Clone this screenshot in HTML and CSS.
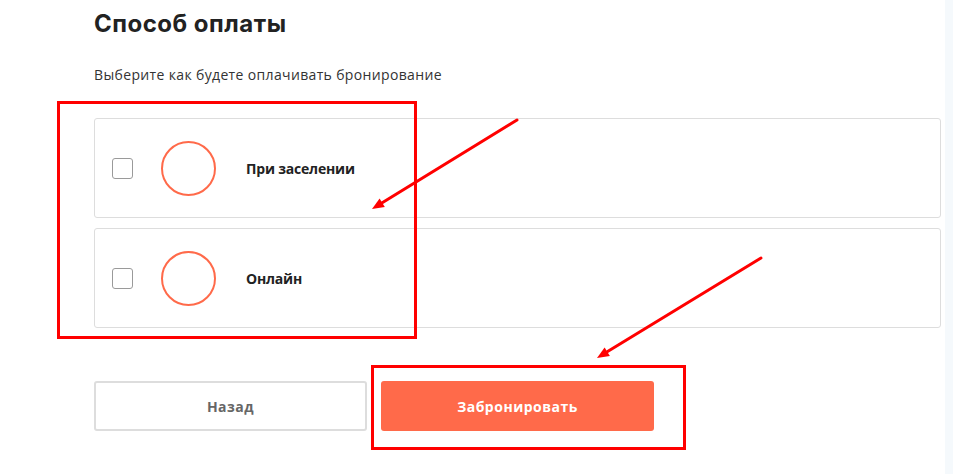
FILE: index.html
```html
<!DOCTYPE html>
<html lang="ru">
<head>
<meta charset="utf-8">
<title>Способ оплаты</title>
<link rel="stylesheet" href="styles.css">
</head>
<body>
<div class="page">
  <h1 class="title">Способ оплаты</h1>
  <p class="subtitle">Выберите как будете оплачивать бронирование</p>
  <div class="options">
    <label class="option">
      <span class="checkbox"></span>
      <span class="ring"></span>
      <span class="option-name">При заселении</span>
    </label>
    <label class="option">
      <span class="checkbox"></span>
      <span class="ring"></span>
      <span class="option-name">Онлайн</span>
    </label>
  </div>
  <div class="actions">
    <button class="btn btn-back">Назад</button>
    <button class="btn btn-book">Забронировать</button>
  </div>
</div>
<svg class="annotations" width="953" height="474" viewBox="0 0 953 474">
  <rect x="58.5" y="102.5" width="357" height="235" fill="none" stroke="#ff0000" stroke-width="3"/>
  <rect x="372.5" y="366.5" width="312" height="82" fill="none" stroke="#ff0000" stroke-width="3"/>
  <line x1="517" y1="120" x2="382.2" y2="202.7" stroke="#ff0000" stroke-width="3" stroke-linecap="round"/>
  <polygon points="372,209 384.8,207 379.6,198.4" fill="#ff0000"/>
  <line x1="761" y1="258" x2="607.2" y2="351.7" stroke="#ff0000" stroke-width="3" stroke-linecap="round"/>
  <polygon points="597,358 609.9,356 604.6,347.5" fill="#ff0000"/>
</svg>
</body>
</html>
```
FILE: styles.css
```css
html, body {
  margin: 0;
  padding: 0;
}
body {
  background: #f5f9fc;
  width: 953px;
  height: 474px;
  overflow: hidden;
  position: relative;
  font-family: "Open Sans", "Liberation Sans", sans-serif;
}
.page {
  background: #ffffff;
  width: 945px;
  height: 474px;
  box-sizing: border-box;
  padding: 9px 0 0 94px;
}
.title {
  margin: 0;
  font-family: Inter, "Open Sans", sans-serif;
  font-size: 24px;
  line-height: 30px;
  font-weight: 700;
  letter-spacing: 0.5px;
  color: #222222;
}
.subtitle {
  margin: 27px 0 0;
  font-size: 14px;
  line-height: 18px;
  letter-spacing: 0.35px;
  color: #333333;
}
.options {
  margin-top: 34px;
  width: 847px;
  display: flex;
  flex-direction: column;
  gap: 10px;
}
.option {
  height: 100px;
  box-sizing: border-box;
  border: 1px solid #dddddd;
  border-radius: 3px;
  display: flex;
  align-items: center;
  padding-left: 17px;
}
.checkbox {
  width: 21px;
  height: 21px;
  box-sizing: border-box;
  border: 1px solid #9a9a9a;
  border-radius: 3px;
  flex: none;
}
.ring {
  width: 55px;
  height: 55px;
  box-sizing: border-box;
  border: 2px solid #ff6a4a;
  border-radius: 50%;
  margin-left: 28px;
  flex: none;
}
.option-name {
  margin-left: 30px;
  font-size: 14px;
  font-weight: 700;
  letter-spacing: -0.2px;
  color: #222222;
}
.actions {
  margin-top: 53px;
  display: flex;
  gap: 14px;
}
.btn {
  width: 273px;
  height: 50px;
  box-sizing: border-box;
  border-radius: 3px;
  font-family: "Open Sans", "Liberation Sans", sans-serif;
  font-size: 14px;
  font-weight: 700;
  letter-spacing: 0.5px;
  cursor: pointer;
}
.btn-back {
  background: #ffffff;
  border: 2px solid #dddddd;
  color: #666666;
}
.btn-book {
  background: #ff6a4a;
  border: none;
  color: #ffffff;
}
.annotations {
  position: absolute;
  left: 0;
  top: 0;
  pointer-events: none;
}
```
